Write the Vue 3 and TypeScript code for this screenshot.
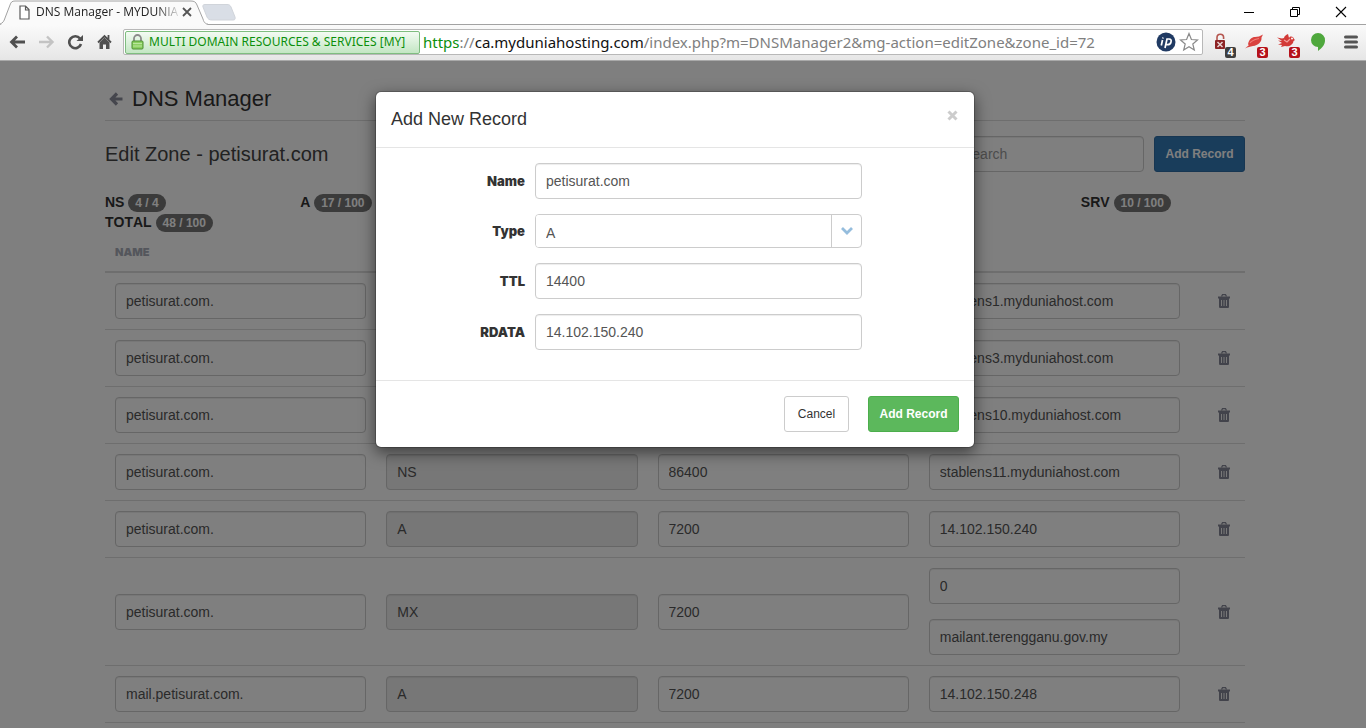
<script setup lang="ts">
import { ref } from 'vue'

interface Quota { label: string; usage: string; slot: string }
interface ZoneRecord { name: string; type: string; ttl: string; rdata: string[] }

const quotas: Quota[] = [
  { label: 'NS', usage: '4 / 4', slot: 'first' },
  { label: 'A', usage: '17 / 100', slot: 'second' },
  { label: 'SRV', usage: '10 / 100', slot: 'sixth' },
  { label: 'TOTAL', usage: '48 / 100', slot: 'first' },
]

const records = ref<ZoneRecord[]>([
  { name: 'petisurat.com.', type: 'NS', ttl: '86400', rdata: ['stablens1.myduniahost.com'] },
  { name: 'petisurat.com.', type: 'NS', ttl: '86400', rdata: ['stablens3.myduniahost.com'] },
  { name: 'petisurat.com.', type: 'NS', ttl: '86400', rdata: ['stablens10.myduniahost.com'] },
  { name: 'petisurat.com.', type: 'NS', ttl: '86400', rdata: ['stablens11.myduniahost.com'] },
  { name: 'petisurat.com.', type: 'A', ttl: '7200', rdata: ['14.102.150.240'] },
  { name: 'petisurat.com.', type: 'MX', ttl: '7200', rdata: ['0', 'mailant.terengganu.gov.my'] },
  { name: 'mail.petisurat.com.', type: 'A', ttl: '7200', rdata: ['14.102.150.248'] },
])

const form = ref({ name: 'petisurat.com', type: 'A', ttl: '14400', rdata: '14.102.150.240' })
</script>

<template>
  <div class="window">
    <header class="chrome">
      <div class="strip">
        <div class="tab">
          <svg class="tab-shape" width="208" height="25" viewBox="0 0 208 25" aria-hidden="true">
            <path d="M0 25C3 24 4 21 5 18L10 5C11 2 12 1 15 1H191C194 1 196 2 197 5L203 19C204 23 206 24 208 25Z" fill="#fafafa" />
            <path d="M0 24C3 23 4 21 5 18L10 5C11 2 12 1 15 1H191C194 1 196 2 197 5L203 19C204 23 206 24 208 24" fill="none" stroke="#a2a2a2" />
          </svg>
          <svg class="page-icon" width="11" height="15" viewBox="0 0 11 15" aria-hidden="true">
            <path d="M1 1H6.500L10 4.500V14H1ZM6.500 1V5H10" fill="#fff" stroke="#5a5a5a" stroke-width="1.200" />
          </svg>
          <span class="tab-title">DNS Manager - MYDUNIA</span>
          <button class="bare tab-close" type="button" aria-label="Close tab">
            <svg width="10" height="10" viewBox="0 0 10 10"><path d="M1 1L9 9M9 1L1 9" stroke="#555" stroke-width="1.800" /></svg>
          </button>
        </div>
        <button class="bare new-tab" type="button" aria-label="New tab">
          <svg width="34" height="17" viewBox="0 0 34 17"><path d="M3 .5H25C27 .5 28 1 29 3L33 13C33.500 15 33 16 31 16H10C7 16 6 15 5 13L1 3C.500 1.500 1 .500 3 .500Z" fill="#d9dee6" stroke="#d0d4da" /></svg>
        </button>
        <div class="window-buttons">
          <button class="bare" type="button" aria-label="Minimize"><svg width="12" height="12" viewBox="0 0 12 12"><path d="M1 6.500H11" stroke="#000" /></svg></button>
          <button class="bare" type="button" aria-label="Restore"><svg width="12" height="12" viewBox="0 0 12 12"><path d="M1.500 3.500H8.500V10.500H1.500ZM3.500 3V1.500H10.500V8.500H9" fill="none" stroke="#000" /></svg></button>
          <button class="bare" type="button" aria-label="Close"><svg width="12" height="12" viewBox="0 0 12 12"><path d="M1 1L11 11M11 1L1 11" stroke="#000" stroke-width="1.100" /></svg></button>
        </div>
      </div>

      <div class="toolbar">
        <nav class="nav-buttons">
          <button class="bare" type="button" aria-label="Back"><svg width="17" height="16" viewBox="0 0 17 16"><path d="M16 8H3M8 2.500L2.500 8L8 13.500" fill="none" stroke="#505050" stroke-width="2.800" /></svg></button>
          <button class="bare" type="button" aria-label="Forward"><svg width="17" height="16" viewBox="0 0 17 16"><path d="M1 8H14M9 2.500L14.500 8L9 13.500" fill="none" stroke="#c3c3c3" stroke-width="2.400" /></svg></button>
          <button class="bare" type="button" aria-label="Reload"><svg width="17" height="16" viewBox="0 0 17 16"><path d="M13 4.500A6 6 0 1 0 14 10" fill="none" stroke="#505050" stroke-width="2.600" /><path d="M16 1V7H9.500Z" fill="#505050" /></svg></button>
          <button class="bare" type="button" aria-label="Home"><svg width="17" height="16" viewBox="0 0 17 16"><path d="M2 8.500L8.500 2L15 8.500M12.500 1V6" fill="none" stroke="#505050" stroke-width="1.800" /><path d="M3.500 8.500L8.500 3.500L13.500 8.500V15H10V10.500H7V15H3.500Z" fill="#505050" /></svg></button>
        </nav>
        <div class="address">
          <div class="identity">
            <svg width="13" height="16" viewBox="0 0 13 16" aria-hidden="true">
              <path d="M3 8V4.500A3.500 3.500 0 0 1 10 4.500V8" fill="none" stroke="#8b8b8b" stroke-width="1.800" />
              <rect x="1" y="7" width="11" height="8" rx="1" fill="#8bd060" stroke="#4d8f32" />
              <path d="M2 9.500H11M2 12H11" stroke="#b9e59d" />
            </svg>
            <span>MULTI DOMAIN RESOURCES &amp; SERVICES [MY]</span>
          </div>
          <div class="url"><span class="scheme">https</span><span class="dim">://</span>ca.myduniahosting.com<span class="dim">/index.php?m=DNSManager2&amp;mg-action=editZone&amp;zone_id=72</span></div>
          <svg width="20" height="20" viewBox="0 0 20 20" aria-hidden="true">
            <circle cx="10" cy="10" r="9.500" fill="#203a63" />
            <path d="M6.500 8L5.300 13.500M7 5.500L6.800 6.500M9 16L11 7H13C15 7 15.500 8.300 15 10C14.600 12 13.300 12.700 11.500 12.700H10" fill="none" stroke="#fff" stroke-width="1.700" />
          </svg>
          <button class="bare" type="button" aria-label="Bookmark this page"><svg width="20" height="20" viewBox="0 0 20 20"><path d="M10 1.500L12.400 7.500L18.500 8L13.800 12L15.300 18L10 14.700L4.700 18L6.200 12L1.500 8L7.600 7.500Z" fill="#fff" stroke="#8a8a8a" stroke-width="1.200" /></svg></button>
        </div>
        <div class="extensions">
          <button class="bare ext" type="button" aria-label="Lock extension">
            <svg width="24" height="24" viewBox="0 -2 24 24"><path d="M6 8V5.500A3.300 3.300 0 0 1 12.600 5.500V7" fill="none" stroke="#b5564f" stroke-width="1.600" /><rect x="4" y="8" width="10" height="9" rx="1" fill="#8d2425" /><path d="M6.500 10L11.500 15M11.500 10L6.500 15" stroke="#e9d4d4" stroke-width="1.500" /></svg>
            <span class="count grey">4</span>
          </button>
          <button class="bare ext" type="button" aria-label="Feather extension">
            <svg width="24" height="24" viewBox="0 -2 24 24"><path d="M2 16.500L6 13L5 12.500C6 7 9 5 12 5L16 4.500L20 2.500L18.500 5.500C19 10 15 13.500 10 14C7 14.500 5 15 2 16.500Z" fill="#d9423f" /><path d="M7 11C9 8 12 7.500 16 6.500" stroke="#f17d78" stroke-width="1.200" fill="none" /></svg>
            <span class="count">3</span>
          </button>
          <button class="bare ext" type="button" aria-label="Bird extension">
            <svg width="24" height="24" viewBox="0 -2 24 24"><path d="M2 5.500L7 6.500L9 6C9 4 11 3 13 2L14 6C15 4 18 4 19 7L20 8L18.500 9C18 13 14 15 10 14L6 15L7 13L3 12.500L7 11L3 8.500L7 9Z" fill="#d23a37" /><path d="M9 8L12 10L15 7" stroke="#f2a09c" stroke-width="1.200" fill="none" /><circle cx="17" cy="6.500" r="1" fill="#fff" /></svg>
            <span class="count">3</span>
          </button>
          <button class="bare ext" type="button" aria-label="Chat extension">
            <svg width="24" height="24" viewBox="0 -1 24 24"><path d="M11 2A7 7 0 0 1 18 9.500C18 14 15 17 11 20V16A7 7 0 0 1 11 2Z" fill="#4fa83d" /></svg>
          </button>
          <button class="bare menu" type="button" aria-label="Menu"><svg width="14" height="14" viewBox="0 0 14 14"><path d="M1.500 2H12.500M1.500 7H12.500M1.500 12H12.500" stroke="#555" stroke-width="3" stroke-linecap="round" /></svg></button>
        </div>
      </div>
    </header>

    <div class="viewport">
      <main class="page">
        <div class="container">
          <h1>
            <a href="#" aria-label="Back"><svg width="14" height="14" viewBox="0 0 14 14"><path d="M13.500 7H3M8 1.500L2.500 7L8 12.500" fill="none" stroke="#8b8d9b" stroke-width="3.200" /></svg></a>
            DNS Manager
          </h1>
          <div class="zone-bar">
            <h2>Edit Zone - petisurat.com</h2>
            <input class="field search" type="search" placeholder="Search" aria-label="Search">
            <button class="btn primary" type="button">Add Record</button>
          </div>
          <div class="quotas">
            <div v-for="q in quotas" :key="q.label" :class="q.slot">{{ q.label }} <span class="badge">{{ q.usage }}</span></div>
          </div>
          <table>
            <colgroup><col><col><col><col><col class="actions-col"></colgroup>
            <thead><tr><th scope="col">NAME</th><th colspan="4"></th></tr></thead>
            <tbody>
              <tr v-for="(r, i) in records" :key="i">
                <td><input v-model="r.name" class="field" type="text" aria-label="Name"></td>
                <td><input class="field" type="text" :value="r.type" readonly aria-label="Type"></td>
                <td><input v-model="r.ttl" class="field" type="text" aria-label="TTL"></td>
                <td>
                  <div class="stack"><input v-for="(_, j) in r.rdata" :key="j" v-model="r.rdata[j]" class="field" type="text" aria-label="RDATA"></div>
                </td>
                <td>
                  <button class="bare delete" type="button" aria-label="Delete record">
                    <svg width="12" height="14" viewBox="0 0 12 14"><path d="M3.500 2.500L4.500 .700H7.500L8.500 2.500" fill="none" stroke="#858796" stroke-width="1.300" /><path d="M0 2.500H12V4.500H11V12.500C11 13.500 10.500 14 9.500 14H2.500C1.500 14 1 13.500 1 12.500V4.500H0Z" fill="#858796" /><path d="M3.500 6V12M6 6V12M8.500 6V12" stroke="#f0f0f0" stroke-width="1" /></svg>
                  </button>
                </td>
              </tr>
            </tbody>
          </table>
        </div>
      </main>

      <div class="backdrop">
        <form class="modal" role="dialog" aria-labelledby="modal-title" @submit.prevent>
          <div class="modal-head">
            <h3 id="modal-title">Add New Record</h3>
            <button class="bare" type="button" aria-label="Close"><svg width="11" height="11" viewBox="0 0 11 11"><path d="M1.500 1.500L9.500 9.500M9.500 1.500L1.500 9.500" stroke="#ccc" stroke-width="3" /></svg></button>
          </div>
          <div class="modal-body">
            <div class="group"><label for="rec-name">Name</label><input id="rec-name" v-model="form.name" class="field" type="text"></div>
            <div class="group">
              <label for="rec-type">Type</label>
              <div class="select">
                <select id="rec-type" v-model="form.type"><option>A</option></select>
                <span class="arrow"><svg width="12" height="8" viewBox="0 0 12 8" aria-hidden="true"><path d="M1 1L6 6L11 1" fill="none" stroke="#95bddd" stroke-width="2.800" /></svg></span>
              </div>
            </div>
            <div class="group"><label for="rec-ttl">TTL</label><input id="rec-ttl" v-model="form.ttl" class="field" type="text"></div>
            <div class="group"><label for="rec-data">RDATA</label><input id="rec-data" v-model="form.rdata" class="field" type="text"></div>
          </div>
          <div class="modal-foot">
            <button class="btn cancel" type="button">Cancel</button>
            <button class="btn success" type="submit">Add Record</button>
          </div>
        </form>
      </div>
    </div>
  </div>
</template>

<style>
html,
body {
  margin: 0;
  overflow: hidden;
}
</style>

<style scoped>
* {
  box-sizing: border-box;
}

.window {
  display: flex;
  flex-direction: column;
  height: 100vh;
  font: 14px/20px "Liberation Sans", Arial, sans-serif;
  color: #333;
}

.bare {
  display: inline-flex;
  align-items: center;
  justify-content: center;
  padding: 0;
  border: 0;
  background: none;
}

svg {
  display: block;
  flex: none;
}

/* Browser frame */
.chrome {
  flex: none;
  font-family: "Noto Sans", "Open Sans", sans-serif;
}

.strip {
  display: flex;
  height: 24px;
  background: #fff;
}

.tab {
  position: relative;
  z-index: 1;
  display: flex;
  align-items: center;
  width: 202px;
  padding-left: 19px;
}

.tab-shape {
  position: absolute;
  top: 0;
  left: 0;
}

.page-icon,
.tab-title,
.tab-close {
  position: relative;
}

.tab-title {
  width: 146px;
  margin-left: 6px;
  font-family: "Open Sans", sans-serif;
  font-size: 12px;
  white-space: nowrap;
  color: #222;
  mask-image: linear-gradient(to right, #000 120px, transparent);
}

.new-tab {
  align-self: center;
}

.window-buttons {
  display: flex;
  gap: 34px;
  margin-left: auto;
  padding-right: 19px;
}

.toolbar {
  display: flex;
  align-items: center;
  height: 37px;
  padding: 0 8px 1px 9px;
  border-top: 1px solid #a2a2a2;
  border-bottom: 1px solid #a9a9a9;
  background: linear-gradient(#fafafa, #e6e6e6);
}

.nav-buttons {
  display: flex;
  gap: 12px;
}

.address {
  display: flex;
  flex: 1;
  align-items: center;
  gap: 3px;
  height: 26px;
  margin-left: 10px;
  padding: 0 3px 0 1px;
  border: 1px solid #b8b8b8;
  border-radius: 2px;
  background: #fff;
}

.identity {
  display: flex;
  align-items: center;
  gap: 5px;
  width: 295px;
  height: 23px;
  padding-left: 5px;
  border: 1px solid #7fbd80;
  border-radius: 2px;
  background: linear-gradient(#f3fbf3, #c3e6c3);
  color: #0b8f0b;
  font-size: 12px;
  white-space: nowrap;
}

.url {
  flex: 1;
  min-width: 0;
  overflow: hidden;
  font-size: 15px;
  white-space: nowrap;
  color: #111;
}

.scheme {
  color: #0b8f0b;
}

.dim {
  color: #808080;
}

.extensions {
  display: flex;
  align-items: center;
  gap: 8px;
  margin-left: 8px;
}

.ext {
  position: relative;
}

.count {
  position: absolute;
  right: -1px;
  bottom: -4px;
  width: 11px;
  height: 11px;
  border-radius: 2px;
  background: #b5121b;
  color: #fff;
  font: bold 11px/11px "Liberation Sans", Arial, sans-serif;
}

.grey {
  background: #3f3f3f;
}

.menu {
  margin-left: 5px;
}

/* Page */
.viewport {
  position: relative;
  flex: 1;
  min-height: 0;
  overflow: hidden;
  background: #fff;
}

.page {
  padding: 0 121px 0 105px;
}

.container {
  max-width: 1140px;
  margin: 0 auto;
}

h1,
h2,
h3 {
  margin: 0;
  font-weight: normal;
}

h1 {
  display: flex;
  align-items: center;
  gap: 9px;
  height: 60px;
  padding: 16px 0 0 4px;
  border-bottom: 1px solid #ddd;
  font-size: 22px;
}

.zone-bar {
  display: flex;
  align-items: center;
  gap: 10px;
  padding-top: 15px;
}

h2 {
  flex: 1;
  font-size: 20px;
  color: #444;
}

.field {
  display: block;
  width: 100%;
  height: 36px;
  padding: 0 10px;
  border: 1px solid #ccc;
  border-radius: 4px;
  background: #fff;
  box-shadow: inset 0 1px 1px rgba(0, 0, 0, 0.075);
  color: #555;
  font: 14px "Liberation Sans", Arial, sans-serif;
}

.field[readonly] {
  background: #eee;
}

.field::placeholder {
  color: #999;
  opacity: 1;
}

.search {
  width: 192px;
  appearance: none;
}

.btn {
  min-width: 91px;
  height: 36px;
  padding: 0 10px;
  border: 1px solid #ccc;
  border-radius: 3px;
  background: #fff;
  font: bold 12px "Liberation Sans", Arial, sans-serif;
}

.primary {
  border-color: #2e6da4;
  background: #337ab7;
  color: #fff;
}

.quotas {
  display: grid;
  grid-template-columns: repeat(6, 1fr);
  margin: 20px -31px 0 0;
  font-weight: bold;
  font-kerning: none;
}

.first {
  grid-column: 1;
}

.second {
  grid-column: 2;
}

.sixth {
  grid-column: 6;
}

.badge {
  display: inline-block;
  padding: 0 7px;
  border-radius: 9px;
  background: #777;
  color: #fff;
  font-size: 12px;
  line-height: 18px;
}

table {
  width: 100%;
  table-layout: fixed;
  border-collapse: separate;
  border-spacing: 0;
}

.actions-col {
  width: 55px;
}

th {
  height: 41px;
  padding: 0 10px;
  border-bottom: 2px solid #ddd;
  text-align: left;
  color: #a9adb8;
  font: 900 11px/20px Inter, sans-serif;
}

td {
  padding: 10px;
  border-bottom: 1px solid #ddd;
}

.stack {
  display: grid;
  gap: 15px;
}

.delete {
  display: flex;
  height: 34px;
  margin-left: auto;
  padding: 0 5px;
}

/* Dialog */
.backdrop {
  position: absolute;
  inset: 0;
  padding: 30px 16px 0 0;
  background: rgba(0, 0, 0, 0.5);
}

.modal {
  max-width: 600px;
  margin: 0 auto;
  border: 1px solid rgba(0, 0, 0, 0.2);
  border-radius: 6px;
  background: #fff;
  background-clip: padding-box;
  box-shadow: 0 5px 15px rgba(0, 0, 0, 0.5);
}

.modal-head {
  display: flex;
  align-items: flex-start;
  justify-content: space-between;
  height: 56px;
  padding: 17px 16px 0 15px;
  border-bottom: 1px solid #e5e5e5;
}

.modal-head .bare {
  padding-top: 1px;
}

h3 {
  font-size: 18px;
}

.modal-body {
  display: grid;
  gap: 15px;
  padding: 15px 112px 30px 15px;
}

.group {
  display: grid;
  grid-template-columns: 134px minmax(0, 1fr);
  gap: 10px;
  align-items: center;
}

label {
  text-align: right;
  font: 900 13px/20px Inter, sans-serif;
}

.select {
  display: flex;
  height: 34px;
  overflow: hidden;
  border: 1px solid #ccc;
  border-radius: 4px;
}

select {
  flex: 1;
  padding: 3px 10px 0;
  border: 0;
  appearance: none;
  background: #fff;
  color: #555;
  font: 14px "Liberation Sans", Arial, sans-serif;
}

.arrow {
  display: flex;
  align-items: center;
  justify-content: center;
  width: 30px;
  border-left: 1px solid #ccc;
}

.modal-foot {
  display: flex;
  justify-content: flex-end;
  gap: 19px;
  padding: 15px;
  border-top: 1px solid #e5e5e5;
}

.cancel {
  min-width: 65px;
  color: #333;
  font-weight: normal;
}

.success {
  border-color: #4cae4c;
  background: #5cb85c;
  color: #fff;
}
</style>
